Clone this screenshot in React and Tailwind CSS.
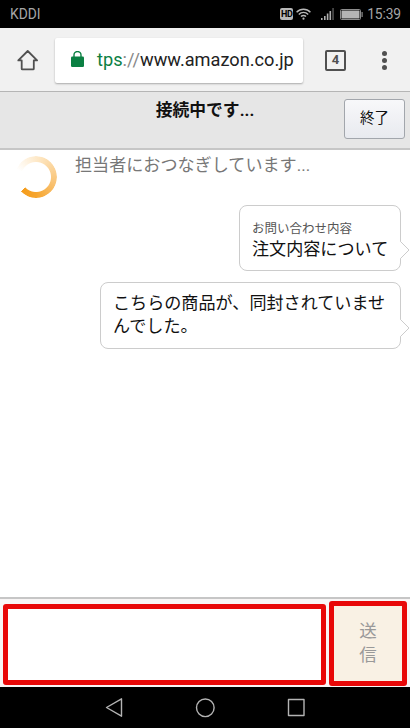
function StatusBar() {
  return (
    <div className="flex h-7 items-center justify-between bg-black pr-[9px] pl-[10px] text-[13.8px] text-[#a6a6a6]">
      <span className="pt-px">KDDI</span>
      <div className="flex items-center">
        <span className="mr-[3px] flex h-[12px] w-[13px] items-center justify-center rounded-[2px] bg-[#b8b8b8] text-[9px] leading-none font-bold tracking-[-0.4px] text-black">
          HD
        </span>
        <svg className="mr-[10px] h-3 w-[15px]" viewBox="0 0 15 12" fill="none" stroke="#b8b8b8" strokeWidth="1.4">
          <path d="M.6 4.2C4.4.2 10.6.2 14.4 4.2M2.8 6.4c2.6-2.7 6.8-2.7 9.4 0M5 8.6c1.4-1.4 3.6-1.4 5 0" />
          <circle cx="7.5" cy="10.7" r="1.1" fill="#b8b8b8" stroke="none" />
        </svg>
        <svg className="mr-[6px] h-3 w-[13px]" viewBox="0 0 13 12" fill="#b0b0b0">
          <path d="M0 10h1.6v2H0zM3 8h1.6v4H3zM5.8 5.6h1.6V12H5.8zM8.5 3h1.6v9H8.5z" />
          <path d="M11.3 0h1.5v12h-1.5z" fill="#555" />
        </svg>
        <svg className="mr-[4px] h-[11px] w-[23px]" viewBox="0 0 23 11">
          <rect x=".5" y=".5" width="20" height="10" rx="1" fill="none" stroke="#8d8d8d" />
          <rect x="1.5" y="1.5" width="18" height="8" fill="#b5b5b5" />
          <path d="M21.5 3h1.2v5h-1.2z" fill="#8d8d8d" />
        </svg>
        <span className="pt-px tracking-[-0.1px]">15:39</span>
      </div>
    </div>
  )
}

function BrowserBar() {
  return (
    <div className="flex h-16 items-center border-b border-[#b5b5b5] bg-[#f1f1f1] pt-px pl-[17px]">
      <svg className="h-[22px] w-[22px]" viewBox="0 0 22 22" fill="none" stroke="#505050" strokeWidth="1.8" strokeLinejoin="round">
        <path d="M1.3 11.4 10.7 2l9.4 9.4h-3.3v8.3c0 .4-.3.7-.7.7H5.4c-.4 0-.7-.3-.7-.7v-8.3z" />
      </svg>
      <div className="ml-4 flex h-[45px] w-[248px] items-center rounded-[2px] bg-white pl-4 shadow-[0_1px_2px_rgba(0,0,0,0.3)]">
        <svg className="mr-[13px] mb-[3px] h-4 w-[13px]" viewBox="0 0 13 16">
          <rect y="5.5" width="13" height="10.5" rx="1.2" fill="#0b8043" />
          <path d="M3 6V4a3.5 3.5 0 0 1 7 0v2" fill="none" stroke="#0b8043" strokeWidth="1.4" />
        </svg>
        <span className="text-[18.2px] whitespace-nowrap text-[#222]">
          <span className="text-[#0b8043]">tps</span>
          <span className="text-[#888]">://</span>www.amazon.co.jp
        </span>
      </div>
      <div className="ml-[22px] flex h-[21px] w-[21px] items-center justify-center rounded-[2px] border-2 border-[#505050] text-[13px] font-bold text-[#505050]">
        4
      </div>
      <div className="ml-[36px] flex flex-col gap-[2px]">
        <span className="h-[5px] w-[5px] rounded-full bg-[#505050]"></span>
        <span className="h-[5px] w-[5px] rounded-full bg-[#505050]"></span>
        <span className="h-[5px] w-[5px] rounded-full bg-[#505050]"></span>
      </div>
    </div>
  )
}

function Bubble({ className, children }) {
  return (
    <div className={`relative mr-[9px] self-end rounded-[8px] border border-[#ccc] bg-white pl-3 text-[17.1px] leading-[23px] text-[#111] ${className}`}>
      {children}
      {/* Pointer on the right edge */}
      <svg className="absolute -right-[10px] bottom-[10px] h-5 w-[10px]" viewBox="0 0 10 20">
        <path d="M0 1.5h1L9 10l-8 8.5H0z" fill="#fff" />
        <path d="M.5 0v1.5L9 10 .5 18.5V20" fill="none" stroke="#ccc" />
      </svg>
    </div>
  )
}

function App() {
  return (
    <div className="flex h-[728px] w-[410px] flex-col overflow-hidden bg-white font-[Roboto,'Noto_Sans_CJK_JP',sans-serif]">
      <StatusBar />
      <BrowserBar />

      {/* Chat header */}
      <header className="relative flex h-[58px] justify-center border-b-2 border-[#c6c6c6] bg-[#e6e6e6]">
        <h1 className="pt-[6px] text-[16.8px] leading-[24px] font-bold text-[#111]">接続中です...</h1>
        <button className="absolute top-[7px] right-[5px] h-10 w-[61px] rounded-[3px] border border-[#a2a6ac] bg-linear-to-b from-[#f8f8fa] to-[#e8eaef] text-[14.5px] text-[#111]">
          終了
        </button>
      </header>

      {/* Messages */}
      <main className="flex flex-1 flex-col">
        <div className="flex h-[55px] pt-[3px] pl-[15px]">
          <div className="mt-[3px] mr-[18px] h-[42px] w-[42px] rounded-full bg-[conic-gradient(from_290deg,#fff_0deg,#fde3bb_90deg,#f9c477_175deg,#f6a52e_250deg,#f59d1c_295deg,transparent_296deg)] mask-[radial-gradient(circle,transparent_14.5px,black_15.5px)]"></div>
          <p className="text-[17.1px] leading-[24px] text-[#777]">担当者におつなぎしています...</p>
        </div>
        <Bubble className="h-[66px] w-[162px] pt-[12px]">
          <p className="text-[12.5px] leading-[21px] text-[#555]">お問い合わせ内容</p>
          <p className="leading-[21px]">注文内容について</p>
        </Bubble>
        <Bubble className="mt-[11px] h-[67px] w-[301px] pt-[9px]">
          <p>
            こちらの商品が、同封されていませ
            <br />
            んでした。
          </p>
        </Bubble>
      </main>

      {/* Message form */}
      <footer className="flex h-[90px] items-start border-t-2 border-[#c6c6c6] bg-[#f8f5f5] pl-[3px]">
        <div className="mt-[5px] h-[81px] w-[323px] rounded-[3px] border-[5px] border-[#e80808] bg-white"></div>
        <button className="mt-[2px] ml-[3px] flex h-[85px] w-[78px] flex-col items-center justify-center rounded-[3px] border-[5px] border-[#e80808] bg-[#f9f1e4] pb-[2px] text-[17.5px] leading-[24px] text-[#999]">
          <span>送</span>
          <span>信</span>
        </button>
      </footer>

      {/* Android navigation */}
      <nav className="h-[41px] bg-black">
        <svg className="h-[41px] w-[410px]" viewBox="0 0 410 41" fill="none" stroke="#b4b4b4" strokeWidth="1.4" strokeLinejoin="round">
          <path d="M106.5 20.5 121.5 11.8v17.4z" />
          <circle cx="205.3" cy="20.8" r="8.8" />
          <rect x="288.5" y="12.5" width="15.5" height="16" />
        </svg>
      </nav>
    </div>
  )
}

export default App
